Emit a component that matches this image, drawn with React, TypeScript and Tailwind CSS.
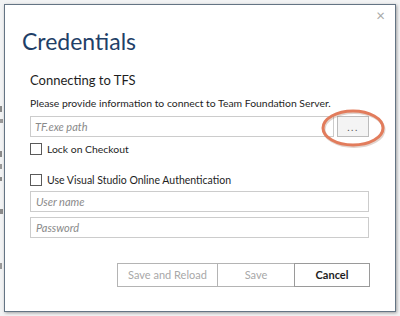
import React from "react";

export default function App() {
  const font = { fontFamily: 'Lato, "Open Sans", Arial, sans-serif' };
  return (
    <div className="relative w-[400px] h-[316px] overflow-hidden bg-[#f2f3f4]" style={font}>
      {/* background window fragments peeking out on the left */}
      <div className="absolute left-0 top-[106px] w-[2px] h-[6px] bg-[#8a8a8a]" />
      <div className="absolute left-0 top-[119px] w-[3px] h-[4px] bg-[#999]" />
      <div className="absolute left-0 top-[151px] w-[2px] h-[6px] bg-[#8a8a8a]" />
      <div className="absolute left-0 top-[164px] w-[2px] h-[5px] bg-[#999]" />
      <div className="absolute left-0 top-[177px] w-[2px] h-[4px] bg-[#8a8a8a]" />
      <div className="absolute left-0 top-[209px] w-[3px] h-[5px] bg-[#8a8a8a]" />
      <div className="absolute left-0 top-[263px] w-[2px] h-[6px] bg-[#999]" />
      <div className="pt-[4px] pl-[4px]">
        <div className="relative w-[392px] h-[308px] bg-white border border-[#647484] shadow-[1px_1px_3px_rgba(0,0,0,0.35)]">
          <div className="absolute right-[10px] top-[3px] text-[15px] leading-[15px] text-[#a8a8a8]">×</div>
          <div className="pl-[17px] pt-[20px]">
            <div className="text-[23px] leading-[32px] text-[#1f3f68]">Credentials</div>
            <div className="pl-[8px]">
              <div className="mt-[14px] text-[13px] leading-[18px] text-[#1e1e1e]">Connecting to TFS</div>
              <div className="mt-[7px] text-[10.4px] leading-[14px] text-[#1e1e1e]">
                Please provide information to connect to Team Foundation Server.
              </div>
              <div className="mt-[6px] flex items-center">
                <div className="w-[304px] h-[21px] border border-[#cccccc] pl-[4px] text-[11px] italic leading-[19px] text-[#8a8a8a]">
                  TF.exe path
                </div>
                <div className="relative ml-[3px] w-[32px] h-[21px] border border-[#bcbcbc] bg-[#f4f4f4] flex items-center justify-center text-[10px] leading-[10px] text-[#555] tracking-[1.5px]">
                  ...
                  <svg className="absolute left-[-18px] top-[-10px]" width="66" height="42" viewBox="0 0 66 42">
                    <ellipse cx="33" cy="21" rx="30" ry="17" fill="none" stroke="rgba(120,60,30,0.22)" strokeWidth="3" transform="translate(1 1.5)" />
                    <ellipse cx="33" cy="21" rx="30" ry="17" fill="none" stroke="#e27c5c" strokeWidth="3" />
                  </svg>
                </div>
              </div>
              <div className="mt-[5px] flex items-center">
                <div className="w-[12px] h-[12px] border border-[#5a5a5a] bg-white" />
                <span className="ml-[5px] text-[10.4px] leading-[14px] text-[#1e1e1e]">Lock on Checkout</span>
              </div>
              <div className="mt-[17px] flex items-center">
                <div className="w-[12px] h-[12px] border border-[#5a5a5a] bg-white" />
                <span className="ml-[5px] text-[10.5px] leading-[14px] text-[#1e1e1e]">Use Visual Studio Online Authentication</span>
              </div>
              <div className="mt-[4px] w-[339px] h-[21px] border border-[#cccccc] pl-[5px] text-[11px] italic leading-[19px] text-[#8a8a8a]">
                User name
              </div>
              <div className="mt-[5px] w-[339px] h-[21px] border border-[#cccccc] pl-[5px] text-[11px] italic leading-[19px] text-[#8a8a8a]">
                Password
              </div>
              <div className="mt-[25px] flex justify-end w-[340px]">
                <div className="w-[101px] h-[24px] border border-[#b4b4b4] flex items-center justify-center text-[11px] text-[#a8a8a8]">Save and Reload</div>
                <div className="-ml-px w-[78px] h-[24px] border border-[#b4b4b4] flex items-center justify-center text-[11px] text-[#a8a8a8]">Save</div>
                <div className="-ml-px w-[76px] h-[24px] border border-[#9a9a9a] flex items-center justify-center text-[11px] font-bold text-[#1e1e1e]">Cancel</div>
              </div>
            </div>
          </div>
        </div>
      </div>
    </div>
  );
}
